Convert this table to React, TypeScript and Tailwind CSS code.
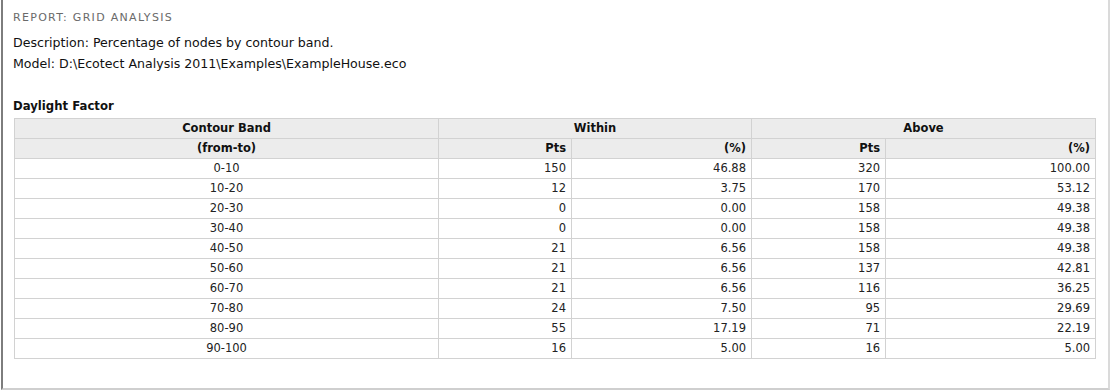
import React from 'react';

const rows: [string, number, string, number, string][] = [
  ['0-10', 150, '46.88', 320, '100.00'],
  ['10-20', 12, '3.75', 170, '53.12'],
  ['20-30', 0, '0.00', 158, '49.38'],
  ['30-40', 0, '0.00', 158, '49.38'],
  ['40-50', 21, '6.56', 158, '49.38'],
  ['50-60', 21, '6.56', 137, '42.81'],
  ['60-70', 21, '6.56', 116, '36.25'],
  ['70-80', 24, '7.50', 95, '29.69'],
  ['80-90', 55, '17.19', 71, '22.19'],
  ['90-100', 16, '5.00', 16, '5.00'],
];

const th = 'h-[20px] p-0 pt-px border border-[#d2d2d2] bg-[#ececec] font-bold text-[11.5px] text-[#111]';
const td = 'h-[20px] p-0 pt-px border border-[#d2d2d2] text-[11.5px] text-[#222]';

const App: React.FC = () => {
  return (
    <div className="w-[1112px] h-[391px] bg-white flex font-['DejaVu_Sans','Verdana',sans-serif]">
      <div className="w-px shrink-0" />
      <div className="flex-1 h-[390px] border-l-2 border-l-[#7d7d7d] border-b-2 border-b-[#cfcfcf] border-r-2 border-r-[#dadada] pl-[10px] pt-[10px]">
        <div className="h-[16px] leading-[16px] text-[11px] tracking-[1.3px] text-[#6a6a6a]">REPORT: GRID ANALYSIS</div>
        <div className="mt-[7px] h-[20px] leading-[20px] text-[12.6px] text-[#111]">Description: Percentage of nodes by contour band.</div>
        <div className="mt-[1px] h-[20px] leading-[20px] text-[12.6px] text-[#111]">Model: D:\Ecotect Analysis 2011\Examples\ExampleHouse.eco</div>
        <div className="mt-[24px] h-[16px] leading-[16px] text-[11.7px] font-bold text-[#111]">Daylight Factor</div>
        <table className="mt-[4px] ml-px w-[1081px] table-fixed border-collapse">
          <colgroup>
            <col className="w-[424px]" />
            <col className="w-[133px]" />
            <col className="w-[180px]" />
            <col className="w-[134px]" />
            <col className="w-[210px]" />
          </colgroup>
          <thead>
            <tr>
              <th className={`${th} text-center`}>Contour Band</th>
              <th colSpan={2} className={`${th} text-center`}>Within</th>
              <th colSpan={2} className={`${th} text-center`}>Above</th>
            </tr>
            <tr>
              <th className={`${th} text-center`}>(from-to)</th>
              <th className={`${th} text-right pr-[5px]`}>Pts</th>
              <th className={`${th} text-right pr-[5px]`}>(%)</th>
              <th className={`${th} text-right pr-[5px]`}>Pts</th>
              <th className={`${th} text-right pr-[5px]`}>(%)</th>
            </tr>
          </thead>
          <tbody>
            {rows.map((r) => (
              <tr key={r[0]}>
                <td className={`${td} text-center`}>{r[0]}</td>
                <td className={`${td} text-right pr-[5px]`}>{r[1]}</td>
                <td className={`${td} text-right pr-[5px]`}>{r[2]}</td>
                <td className={`${td} text-right pr-[5px]`}>{r[3]}</td>
                <td className={`${td} text-right pr-[5px]`}>{r[4]}</td>
              </tr>
            ))}
          </tbody>
        </table>
      </div>
      <div className="w-[2px] shrink-0" />
    </div>
  );
};

export default App;
